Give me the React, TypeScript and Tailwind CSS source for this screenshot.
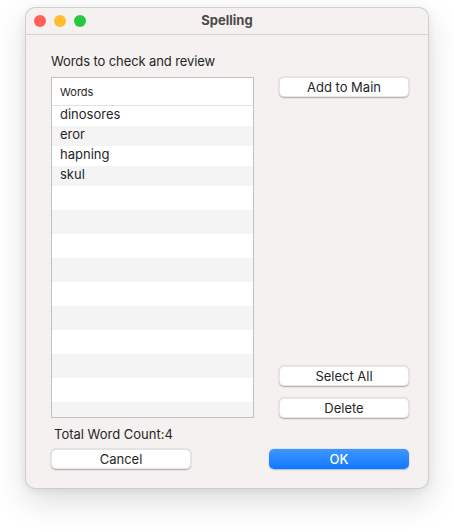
const words = ["dinosores", "eror", "hapning", "skul"];

const MacButton = ({ label, className = "" }: { label: string; className?: string }) => (
  <button
    className={`h-[20px] rounded-[5px] bg-white text-[13px] leading-none text-[#262626] border-[0.5px] border-black/10 shadow-[0_0.5px_1.5px_rgba(0,0,0,0.3)] ${className}`}
  >
    {label}
  </button>
);

const WordTable = () => {
  const empty = Array.from({ length: 10 });
  return (
    <div className="w-[203px] h-[341px] border border-[#c1c1c1] bg-white overflow-hidden flex flex-col">
      <div className="h-[28px] shrink-0 border-b border-[#e2e2e2] flex items-center pl-[8px] pt-[1px] text-[11px] text-[#262626]">
        Words
      </div>
      {words.map((w, i) => (
        <div
          key={w}
          className={`h-[20px] shrink-0 flex items-center pl-[8px] pb-[3px] text-[13px] text-[#262626] ${
            i % 2 === 1 ? "bg-[#f3f4f3]" : "bg-white"
          }`}
        >
          {w}
        </div>
      ))}
      {empty.map((_, i) => (
        <div
          key={i}
          className={`h-[24px] shrink-0 ${i % 2 === 1 ? "bg-[#f3f4f3]" : "bg-white"}`}
        />
      ))}
    </div>
  );
};

const App = () => {
  return (
    <div
      className="w-[454px] h-[532px] bg-white pt-[7px] pl-[25px]"
      style={{ fontFamily: "Inter, 'Liberation Sans', sans-serif" }}
    >
      <div className="w-[404px] h-[482px] rounded-[10px] bg-[#f5f1f0] border-[0.5px] border-black/15 shadow-[0_12px_32px_rgba(0,0,0,0.14),0_2px_8px_rgba(0,0,0,0.06)] flex flex-col overflow-hidden">
        <div className="h-[27px] shrink-0 border-b border-[#d7d3d2] flex items-center relative">
          <div className="flex gap-[8px] pl-[7.5px]">
            <span className="w-[12px] h-[12px] rounded-full bg-[#fe5f57]" />
            <span className="w-[12px] h-[12px] rounded-full bg-[#febc2e]" />
            <span className="w-[12px] h-[12px] rounded-full bg-[#28c840]" />
          </div>
          <div className="absolute inset-0 flex items-center justify-center text-[13px] font-bold text-[#4a4a4a]">
            Spelling
          </div>
        </div>
        <div className="flex flex-col pl-[25px] pr-[19px]">
          <div className="mt-[18px] h-[16px] text-[13px] leading-[16px] tracking-[-0.1px] text-[#262626]">
            Words to check and review
          </div>
          <div className="mt-[8px] flex">
            <WordTable />
            <div className="ml-[25px] flex-1 flex flex-col justify-between">
              <MacButton label="Add to Main" className="w-full" />
              <div className="flex flex-col gap-[12px]">
                <MacButton label="Select All" className="w-full" />
                <MacButton label="Delete" className="w-full" />
              </div>
            </div>
          </div>
          <div className="mt-[8px] pl-[3px] h-[16px] text-[13px] leading-[16px] text-[#262626]">
            Total Word Count:4
          </div>
          <div className="mt-[7px] flex justify-between">
            <MacButton label="Cancel" className="w-[140px]" />
            <button className="w-[140px] h-[20px] rounded-[5px] bg-gradient-to-b from-[#3d96ff] to-[#0a79ff] text-white text-[13px] font-medium leading-none shadow-[0_0.5px_1.5px_rgba(0,0,0,0.25)]">
              OK
            </button>
          </div>
        </div>
      </div>
    </div>
  );
};

export default App;
